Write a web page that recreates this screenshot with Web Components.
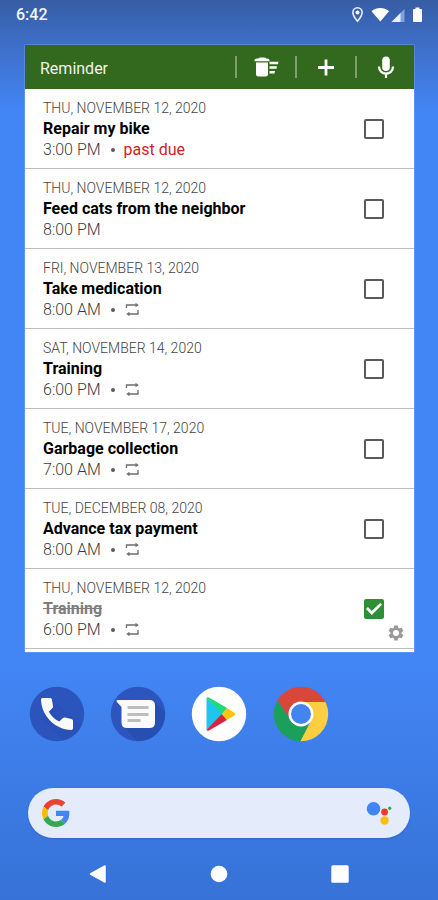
<!DOCTYPE html>
<html lang="en">
<head>
<meta charset="utf-8">
<meta name="viewport" content="width=device-width, initial-scale=1">
<title>Reminder</title>
<style>
html { height: 100%; }
body { margin: 0; min-height: 100%; font-family: Roboto, "Liberation Sans", sans-serif; }
</style>
</head>
<body>
<home-screen></home-screen>
<script>
function define(name, html, setup) {
  const template = document.createElement('template');
  template.innerHTML = html;
  customElements.define(name, class extends HTMLElement {
    connectedCallback() {
      if (this.shadowRoot) return;
      const root = this.attachShadow({ mode: 'open' });
      const content = template.content.cloneNode(true);
      if (setup) setup(this, content);
      root.append(content);
    }
  });
}

define('status-bar', `
<style>
:host { display: flex; align-items: center; justify-content: space-between; height: 29px; padding: 0 14px 0 16px; color: #f4f7fd; font-size: 16px; font-weight: 500; }
svg { display: block; }
</style>
<span>6:42</span>
<svg width="74" height="18" viewBox="0 0 74 18" role="img" aria-label="Location, Wi-Fi, signal, battery">
  <path d="M7.500 1.800a4.600 4.600 0 0 0-4.600 4.600C2.900 9.700 7.500 15.200 7.500 15.200S12.100 9.700 12.100 6.400A4.600 4.600 0 0 0 7.500 1.800z" fill="none" stroke="#e7eefb" stroke-width="1.600"/>
  <circle cx="7.500" cy="6.500" r="2" fill="#fff"/>
  <path d="M21.500 5.200C26.500 .9 34 .9 39 5.200L30.300 15.600z" fill="#fff"/>
  <path d="M41.500 16L54.500 3V16z" fill="#7ea2df"/>
  <path d="M41.500 16L50.500 7V16z" fill="#e9f0fd"/>
  <path d="M65.500 1.500h4V3h1.500a1 1 0 0 1 1 1V15a1 1 0 0 1-1 1h-7a1 1 0 0 1-1-1V4a1 1 0 0 1 1-1h1.500z" fill="#fff"/>
</svg>
`);

define('tool-button', `
<style>
:host { display: flex; align-items: center; width: 60px; }
:host::before { content: ""; width: 2px; height: 22px; margin-left: 1px; background: #7f9f6d; }
button { flex: 1; display: grid; place-items: center; height: 44px; padding: 0; border: 0; background: none; color: #fff; cursor: pointer; }
</style>
<button type="button"><slot></slot></button>
`, (host, c) => c.querySelector('button').setAttribute('aria-label', host.getAttribute('label')));

define('widget-header', `
<style>
:host { display: flex; align-items: center; height: 44px; padding-left: 15px; background: #33691e; color: #eef4eb; }
h1 { flex: 1; margin: 0; padding-top: 3px; font-size: 16px; line-height: 20px; font-weight: 400; }
svg { display: block; }
</style>
<h1>Reminder</h1>
<tool-button label="Clear completed">
  <svg width="28" height="28" viewBox="0 0 28 28" fill="#fff"><path d="M2.500 7.500Q2.500 5.500 5 5.500H6.500Q7 4.500 8.500 4.500H12Q13.500 4.500 14 5.500H15Q17.500 5.500 17.500 7.500V8.300H2.500zM4 9.500H16V21Q16 23.500 13.500 23.500H6.500Q4 23.500 4 21zM17.500 8.700H26.500L26 11.200H17.500zM17.500 13.300H25L24.500 15.700H17.500zM17.500 18H23L22.500 20.500H17.500z"/></svg>
</tool-button>
<tool-button label="Add reminder">
  <svg width="28" height="28" viewBox="0 0 28 28" fill="#fff"><path d="M12.600 6.500h2.800v6.600H22v2.800h-6.600v6.600h-2.800v-6.600H6v-2.800h6.600z"/></svg>
</tool-button>
<tool-button label="Add by voice">
  <svg width="28" height="28" viewBox="0 0 28 28"><rect x="10.200" y="3.500" width="7.600" height="14.500" rx="3.800" fill="#fff"/><path d="M7 13.500C7 23 21 23 21 13.500M14 20.500V25" fill="none" stroke="#fff" stroke-width="2.200"/></svg>
</tool-button>
`);

define('reminder-item', `
<style>
:host { display: block; border-bottom: 1px solid #bdbdbd; background: #fff; }
label { display: flex; align-items: center; padding: 9px 30px 8px 18px; cursor: pointer; }
.text { flex: 1; min-width: 0; display: flex; flex-direction: column; }
.date { font-size: 14px; line-height: 20px; font-weight: 300; color: #444; }
.title { font-size: 16px; line-height: 22px; font-weight: 700; color: #000; }
.meta { display: flex; align-items: center; font-size: 16px; line-height: 20px; font-weight: 300; color: #3c3c3c; }
.dot { width: 4px; height: 4px; margin: 0 9px 0 10px; border-radius: 50%; background: #5c5c5c; }
.late { font-weight: 400; color: #cf2229; }
svg { display: block; }
input { appearance: none; flex: none; display: grid; place-items: center; width: 20px; height: 20px; margin: 0; border: 2px solid #5a5a5a; border-radius: 2px; background: #fff; }
input:checked { border-color: #2f8f36; background: #2f8f36; }
input:checked::before { content: ""; width: 16px; height: 12px; background: #fff; clip-path: polygon(0 50%, 12% 34%, 36% 66%, 88% 0, 100% 14%, 36% 100%); }
:host([done]) .title { color: #7d7d7d; text-decoration: line-through; }
</style>
<label>
  <span class="text">
    <span class="date"></span>
    <span class="title"><slot></slot></span>
    <span class="meta"><span class="time"></span><span class="dot"></span><span class="late">past due</span>
      <svg class="repeat" width="16" height="16" viewBox="0 0 16 16" fill="none" stroke="#6c6c6c" stroke-width="1.300"><path d="M2.500 6V3H12M14 8V12H4.500"/><path d="M11.500 .8L14.700 3L11.500 5.200zM5.500 9.800L2.300 12L5.500 14.200z" fill="#6c6c6c" stroke="none"/></svg>
    </span>
  </span>
  <input type="checkbox">
</label>
`, (host, c) => {
  c.querySelector('.date').textContent = host.getAttribute('date');
  c.querySelector('.time').textContent = host.getAttribute('time');
  const late = host.hasAttribute('late'), repeat = host.hasAttribute('repeat');
  if (!late && !repeat) c.querySelector('.dot').remove();
  if (!late) c.querySelector('.late').remove();
  if (!repeat) c.querySelector('.repeat').remove();
  c.querySelector('input').checked = host.hasAttribute('done');
});

define('reminder-widget', `
<style>
:host { display: block; position: relative; margin: 16px 24px 0 25px; padding-bottom: 3px; background: #fff; box-shadow: 0 0 1px #dfe9fc; }
.settings { position: absolute; right: 8px; bottom: 9px; display: grid; place-items: center; width: 20px; height: 20px; padding: 0; border: 0; background: none; cursor: pointer; }
</style>
<widget-header></widget-header>
<reminder-item date="THU, NOVEMBER 12, 2020" time="3:00 PM" late>Repair my bike</reminder-item>
<reminder-item date="THU, NOVEMBER 12, 2020" time="8:00 PM">Feed cats from the neighbor</reminder-item>
<reminder-item date="FRI, NOVEMBER 13, 2020" time="8:00 AM" repeat>Take medication</reminder-item>
<reminder-item date="SAT, NOVEMBER 14, 2020" time="6:00 PM" repeat>Training</reminder-item>
<reminder-item date="TUE, NOVEMBER 17, 2020" time="7:00 AM" repeat>Garbage collection</reminder-item>
<reminder-item date="TUE, DECEMBER 08, 2020" time="8:00 AM" repeat>Advance tax payment</reminder-item>
<reminder-item date="THU, NOVEMBER 12, 2020" time="6:00 PM" repeat done>Training</reminder-item>
<button class="settings" type="button" aria-label="Settings">
  <svg width="18" height="18" viewBox="0 0 24 24" fill="#9a9a9a"><path d="M19.430 12.980c.040-.320.070-.640.070-.980 0-.340-.030-.660-.070-.980l2.110-1.650c.190-.150.240-.420.120-.640l-2-3.460a.5.5 0 0 0-.610-.220l-2.490 1a7.300 7.300 0 0 0-1.690-.980l-.380-2.650A.49.49 0 0 0 14 2h-4a.49.49 0 0 0-.490.420l-.380 2.650c-.610.250-1.170.590-1.690.980l-2.490-1a.49.49 0 0 0-.610.220l-2 3.460c-.130.220-.070.490.120.640l2.110 1.650a7.900 7.900 0 0 0 0 1.960l-2.110 1.650a.5.5 0 0 0-.120.640l2 3.460c.120.220.390.300.610.220l2.490-1c.520.400 1.080.730 1.690.980l.380 2.650c.030.240.240.420.490.420h4c.250 0 .460-.180.490-.420l.380-2.650a7.300 7.300 0 0 0 1.690-.980l2.490 1c.230.090.490 0 .610-.220l2-3.460a.5.5 0 0 0-.120-.640zM12 16a4 4 0 1 1 0-8 4 4 0 0 1 0 8z"/></svg>
</button>
`);

define('app-dock', `
<style>
:host { display: grid; grid-template-columns: repeat(5, 1fr); justify-items: center; margin-top: 34px; padding: 0 15px 0 16px; }
a { display: block; border-radius: 50%; }
svg { display: block; }
</style>
<a href="#phone" aria-label="Phone">
  <svg width="56" height="56" viewBox="0 0 56 56"><defs><clipPath id="p"><circle cx="28" cy="28" r="27.200"/></clipPath></defs><circle cx="28" cy="28" r="27.200" fill="#2b55bd"/><path clip-path="url(#p)" d="M22 12L56 44V56H36L13 33z" fill="#244bab" opacity=".35"/><path d="M13.500 12H21.500Q22.700 12 22.900 13.500L24 20Q24.200 21.300 23.300 22.200L19.800 25.700C22.300 30 25.800 33.500 30.200 35.500L33.700 32.200Q34.600 31.300 36 31.600L42.500 33Q44 33.400 44 34.800V42.300Q44 44 42.300 44C26 43.500 12.500 30 12 13.500Q12 12 13.500 12z" fill="#fafafa"/></svg>
</a>
<a href="#messages" aria-label="Messages">
  <svg width="56" height="56" viewBox="0 0 56 56"><defs><clipPath id="m"><circle cx="28" cy="28" r="27.200"/></clipPath></defs><circle cx="28" cy="28" r="27.200" fill="#2c55be"/><path clip-path="url(#m)" d="M44 15L56 27V56H28L13 40z" fill="#244aa9" opacity=".6"/><path d="M7.500 14H39.500Q45 14 45 19.500V36.500Q45 42 39.500 42H17Q11.500 42 11.500 36.500V21L6.500 15.500Q6 14 7.500 14z" fill="#fafafa"/><path d="M17.500 21.500h21M17.500 28.500h21M17.500 34.500h13" stroke="#bdbdbd" stroke-width="3"/></svg>
</a>
<a href="#play" aria-label="Play Store">
  <svg width="56" height="56" viewBox="0 0 56 56"><circle cx="28" cy="28" r="27.200" fill="#fff"/><path d="M15.500 12L33.500 28L15.500 44z" fill="#1fc4ef"/><path d="M15.500 12Q16.300 10.600 18 11.600L36 22L32 28z" fill="#1ddb76"/><path d="M15.500 44Q16.300 45.400 18 44.400L36 34L31 27.700z" fill="#db233d"/><path d="M36 22L43.500 26.700Q45.200 28 43.500 29.300L36 34L30.500 28z" fill="#fdc511"/></svg>
</a>
<a href="#chrome" aria-label="Chrome">
  <svg width="56" height="56" viewBox="0 0 56 56"><defs><clipPath id="c"><circle cx="28" cy="28" r="27.200"/></clipPath></defs><g clip-path="url(#c)"><path d="M0 0H56V16H28L17.600 34L4.500 14.500z" fill="#d9463a"/><path d="M4.500 14.500L17.600 34L28 40H38.400L27 56H0V8z" fill="#1b9f5b"/><path d="M28 16H56V56H27L38.400 34z" fill="#fdcd42"/></g><circle cx="28" cy="28" r="12.500" fill="#fff"/><circle cx="28" cy="28" r="10" fill="#4484ee"/></svg>
</a>
`);

define('search-bar', `
<style>
:host { display: flex; align-items: center; height: 50px; margin: 46px 28px 0; padding: 0 12px 0 14px; box-sizing: border-box; border-radius: 25px; background: #e4ecfb; box-shadow: 0 1px 2px #2857a880; }
input { flex: 1; min-width: 0; height: 40px; padding: 0 12px; border: 0; outline: 0; background: none; font: 400 16px Roboto, sans-serif; }
button { display: block; padding: 0; border: 0; background: none; cursor: pointer; }
svg { display: block; }
</style>
<svg width="28" height="28" viewBox="0 0 48 48" role="img" aria-label="Google"><path fill="#EA4335" d="M24 9.500c3.540 0 6.710 1.220 9.210 3.600l6.850-6.850C35.900 2.380 30.470 0 24 0 14.620 0 6.510 5.380 2.560 13.220l7.980 6.190C12.430 13.720 17.740 9.500 24 9.500z"/><path fill="#4285F4" d="M46.980 24.550c0-1.570-.150-3.090-.380-4.550H24v9.020h12.940c-.580 2.960-2.260 5.480-4.780 7.180l7.730 6c4.510-4.180 7.090-10.360 7.090-17.650z"/><path fill="#FBBC05" d="M10.530 28.590c-.480-1.450-.760-2.990-.760-4.590s.270-3.140.760-4.590l-7.980-6.190C.920 16.460 0 20.120 0 24c0 3.880.920 7.540 2.560 10.780z"/><path fill="#34A853" d="M24 48c6.480 0 11.930-2.130 15.890-5.810l-7.730-6c-2.150 1.450-4.920 2.300-8.160 2.300-6.260 0-11.570-4.220-13.470-9.910l-7.980 6.190C6.510 42.620 14.620 48 24 48z"/></svg>
<input type="search" aria-label="Search">
<button type="button" aria-label="Assistant">
  <svg width="32" height="28" viewBox="0 0 32 28"><circle cx="7.500" cy="9.800" r="6.800" fill="#4285f4"/><circle cx="18.600" cy="13" r="3.400" fill="#ea3a2c"/><circle cx="18.600" cy="21.500" r="4.200" fill="#fbbc13"/><circle cx="23.700" cy="9.300" r="1.700" fill="#34a853"/></svg>
</button>
`);

define('nav-bar', `
<style>
:host { display: grid; grid-template-columns: repeat(3, 1fr); justify-items: center; padding: 0 38px; margin-top: 20px; }
button { display: grid; place-items: center; width: 32px; height: 32px; padding: 0; border: 0; background: none; cursor: pointer; }
svg { display: block; }
</style>
<button type="button" aria-label="Back"><svg width="20" height="20" viewBox="0 0 20 20"><path d="M2.500 10L17 2V18z" fill="#fff" stroke="#fff" stroke-width="1.500" stroke-linejoin="round"/></svg></button>
<button type="button" aria-label="Home"><svg width="20" height="20" viewBox="0 0 20 20"><circle cx="10" cy="10" r="8.300" fill="#fff"/></svg></button>
<button type="button" aria-label="Recent apps"><svg width="20" height="20" viewBox="0 0 20 20"><rect x="1.300" y="1.300" width="17.400" height="17.400" rx="1.500" fill="#fff"/></svg></button>
`);

define('home-screen', `
<style>
:host { display: flex; flex-direction: column; box-sizing: border-box; min-height: 100vh; background: linear-gradient(#375da3 0, #3e70ca 48px, #4285f4 110px, #4285f4 74%, #3672d7 100%); }
</style>
<status-bar></status-bar>
<reminder-widget></reminder-widget>
<app-dock></app-dock>
<search-bar></search-bar>
<nav-bar></nav-bar>
`);
</script>
</body>
</html>
